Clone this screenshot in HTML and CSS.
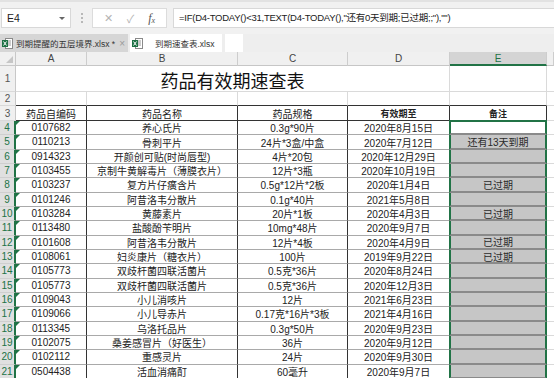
FILE: index.html
```html
<!DOCTYPE html>
<html lang="zh-CN">
<head>
<meta charset="utf-8">
<title>药品有效期速查表</title>
<link rel="stylesheet" href="styles.css">
</head>
<body>
<div class="app">
  <div class="toolbar">
    <div class="namebox"><span>E4</span><span class="caret"></span></div>
    <div class="grip"><i></i><i></i><i></i></div>
    <div class="btns"><span class="bx">✕</span><span class="bok">✓</span><span class="fx">f<sub>x</sub></span></div>
    <div class="formula">=IF(D4-TODAY()&lt;31,TEXT(D4-TODAY(),"还有0天到期;已过期;;"),"")</div>
  </div>
  <div class="tabs">
    <div class="tab dim">
      <svg class="xl" width="11" height="11" viewBox="0 0 11 11"><rect x="3.5" y="0.5" width="7" height="10" fill="#fff" stroke="#8a8a8a"/><path d="M6 3h3M6 5h3M6 7h3" stroke="#9a9a9a"/><rect x="0" y="2" width="6" height="7" fill="#1e7145"/><path d="M1.5 3.5l3 4M4.5 3.5l-3 4" stroke="#fff" stroke-width="1"/></svg>
      <span class="tname">到期提醒的五层境界.xlsx *</span><span class="close">×</span>
    </div>
    <div class="tab on">
      <svg class="xl" width="11" height="11" viewBox="0 0 11 11"><rect x="3.5" y="0.5" width="7" height="10" fill="#fff" stroke="#8a8a8a"/><path d="M6 3h3M6 5h3M6 7h3" stroke="#9a9a9a"/><rect x="0" y="2" width="6" height="7" fill="#1e7145"/><path d="M1.5 3.5l3 4M4.5 3.5l-3 4" stroke="#fff" stroke-width="1"/></svg>
      <span class="tname wide">到期速查表.xlsx</span>
    </div>
    <div class="tab new"></div>
  </div>
  <div class="sheet">
    <div class="corner"></div><div class="ch">A</div><div class="ch">B</div><div class="ch">C</div><div class="ch">D</div><div class="ch sel">E</div><div class="ch"></div>

    <div class="rh">1</div><div class="c title">药品有效期速查表</div><div class="c"></div><div class="f"></div>
    <div class="rh">2</div><div class="c top"></div><div class="c top"></div><div class="c top"></div><div class="c top"></div><div class="c top"></div><div class="f"></div>
    <div class="rh">3</div><div class="hd">药品自编码</div><div class="hd">药品名称</div><div class="hd">药品规格</div><div class="hd b">有效期至</div><div class="hd b">备注</div><div class="f"></div>

    <div class="rh s">4</div><div class="tb a">0107682</div><div class="tb">养心氏片</div><div class="tb">0.3g*90片</div><div class="tb">2020年8月15日</div><div class="e act"></div><div class="f"></div>
    <div class="rh s">5</div><div class="tb a">0110213</div><div class="tb">骨刺平片</div><div class="tb">24片*3盒/中盒</div><div class="tb">2020年7月12日</div><div class="e">还有13天到期</div><div class="f"></div>
    <div class="rh s">6</div><div class="tb a">0914323</div><div class="tb">开颜创可贴(时尚唇型)</div><div class="tb">4片*20包</div><div class="tb">2020年12月29日</div><div class="e"></div><div class="f"></div>
    <div class="rh s">7</div><div class="tb a">0103455</div><div class="tb">京制牛黄解毒片（薄膜衣片）</div><div class="tb">12片*3瓶</div><div class="tb">2020年10月19日</div><div class="e"></div><div class="f"></div>
    <div class="rh s">8</div><div class="tb a">0103237</div><div class="tb">复方片仔癀含片</div><div class="tb">0.5g*12片*2板</div><div class="tb">2020年1月4日</div><div class="e">已过期</div><div class="f"></div>
    <div class="rh s">9</div><div class="tb a">0101246</div><div class="tb">阿昔洛韦分散片</div><div class="tb">0.1g*40片</div><div class="tb">2021年5月8日</div><div class="e"></div><div class="f"></div>
    <div class="rh s">10</div><div class="tb a">0103284</div><div class="tb">黄藤素片</div><div class="tb">20片*1板</div><div class="tb">2020年4月3日</div><div class="e">已过期</div><div class="f"></div>
    <div class="rh s">11</div><div class="tb a">0113480</div><div class="tb">盐酸酚苄明片</div><div class="tb">10mg*48片</div><div class="tb">2020年9月7日</div><div class="e"></div><div class="f"></div>
    <div class="rh s">12</div><div class="tb a">0101608</div><div class="tb">阿昔洛韦分散片</div><div class="tb">12片*4板</div><div class="tb">2020年4月9日</div><div class="e">已过期</div><div class="f"></div>
    <div class="rh s">13</div><div class="tb a">0108061</div><div class="tb">妇炎康片（糖衣片）</div><div class="tb">100片</div><div class="tb">2019年9月22日</div><div class="e">已过期</div><div class="f"></div>
    <div class="rh s">14</div><div class="tb a">0105773</div><div class="tb">双歧杆菌四联活菌片</div><div class="tb">0.5克*36片</div><div class="tb">2020年8月24日</div><div class="e"></div><div class="f"></div>
    <div class="rh s">15</div><div class="tb a">0105773</div><div class="tb">双歧杆菌四联活菌片</div><div class="tb">0.5克*36片</div><div class="tb">2020年12月3日</div><div class="e"></div><div class="f"></div>
    <div class="rh s">16</div><div class="tb a">0109043</div><div class="tb">小儿消咳片</div><div class="tb">12片</div><div class="tb">2021年6月23日</div><div class="e"></div><div class="f"></div>
    <div class="rh s">17</div><div class="tb a">0109066</div><div class="tb">小儿导赤片</div><div class="tb">0.17克*16片*3板</div><div class="tb">2021年4月16日</div><div class="e"></div><div class="f"></div>
    <div class="rh s">18</div><div class="tb a">0113345</div><div class="tb">乌洛托品片</div><div class="tb">0.3g*50片</div><div class="tb">2020年9月23日</div><div class="e"></div><div class="f"></div>
    <div class="rh s">19</div><div class="tb a">0102075</div><div class="tb">桑姜感冒片（好医生）</div><div class="tb">36片</div><div class="tb">2020年9月12日</div><div class="e"></div><div class="f"></div>
    <div class="rh s">20</div><div class="tb a">0102112</div><div class="tb">重感灵片</div><div class="tb">24片</div><div class="tb">2020年9月30日</div><div class="e"></div><div class="f"></div>
    <div class="rh s">21</div><div class="tb a">0504438</div><div class="tb">活血消痛酊</div><div class="tb">60毫升</div><div class="tb">2020年9月7日</div><div class="e"></div><div class="f"></div>
  </div>
</div>
</body>
</html>
```
FILE: styles.css
```css
* { box-sizing: border-box; margin: 0; padding: 0; }
body {
  width: 554px;
  height: 378px;
  overflow: hidden;
  background: #fff;
  font-family: "Liberation Sans", "Noto Sans CJK SC", sans-serif;
  color: #222;
}
.app { width: 554px; }

/* formula toolbar */
.toolbar {
  height: 34px;
  background: #f1f1f1;
  border-top: 2px solid #e2e2e2;
  display: flex;
  align-items: center;
  padding-left: 1px;
}
.namebox {
  width: 70px;
  height: 20px;
  background: #fff;
  border: 1px solid #d8d8d8;
  display: flex;
  align-items: center;
  justify-content: space-between;
  padding: 0 5px 0 5px;
  font-size: 10.5px;
  color: #222;
}
.caret {
  width: 0; height: 0;
  border-left: 3px solid transparent;
  border-right: 3px solid transparent;
  border-top: 3px solid #666;
}
.grip {
  width: 21px;
  height: 20px;
  display: flex;
  flex-direction: column;
  align-items: center;
  justify-content: center;
  gap: 2px;
}
.grip i {
  display: block;
  width: 2px;
  height: 2px;
  background: #b8b8b8;
}
.btns {
  width: 75px;
  height: 20px;
  background: #fff;
  border: 1px solid #dcdcdc;
  display: flex;
  align-items: center;
  justify-content: space-around;
  padding: 0 4px;
  color: #b4b4b4;
  font-size: 11px;
}
.btns .fx {
  font-family: "Liberation Serif", serif;
  font-style: italic;
  color: #555;
  font-size: 12px;
}
.btns .fx sub { font-size: 8px; vertical-align: -1px; }
.formula {
  flex: 1;
  margin-left: 6px;
  height: 20px;
  background: #fff;
  border: 1px solid #d8d8d8;
  border-right: none;
  padding-left: 5px;
  font-size: 9.5px;
  letter-spacing: -0.25px;
  line-height: 18px;
  white-space: nowrap;
  overflow: hidden;
  color: #222;
}

/* workbook tabs */
.tabs {
  height: 18px;
  background: #eeeeee;
  display: flex;
  align-items: stretch;
}
.tab {
  display: flex;
  align-items: center;
  font-size: 8.5px;
  color: #333;
  white-space: nowrap;
}
.tab.dim {
  width: 128px;
  background: #d6d6d6;
  padding-left: 2px;
}
.tab.on {
  width: 92px;
  margin-left: 2px;
  background: #fff;
  padding-left: 2px;
}
.tab.new {
  width: 18px;
  margin-left: 3px;
  background: #fff;
}
.xl { flex: none; }
.tname { margin-left: 3px; }
.tname.wide { margin-left: 12px; }
.close { margin-left: 4px; color: #9a9a9a; font-size: 10px; }

/* sheet grid */
.sheet {
  display: grid;
  grid-template-columns: 16px 71px 151px 110px 102px 97px 1fr;
  grid-template-rows: 14px 26px 14px 15px repeat(18, 14.34px);
  font-size: 10px;
}
.sheet > div {
  display: flex;
  align-items: center;
  justify-content: center;
  white-space: nowrap;
  overflow: hidden;
  position: relative;
}
.corner {
  background: #f0f0f0;
  border-right: 1px solid #c8c8c8;
  border-bottom: 1px solid #c8c8c8;
}
.corner::after {
  content: "";
  position: absolute;
  right: 2px;
  bottom: 2px;
  border-left: 7px solid transparent;
  border-bottom: 7px solid #c6c6c6;
}
.ch {
  background: #f0f0f0;
  border-right: 1px solid #cdcdcd;
  border-bottom: 1px solid #c6c6c6;
  color: #444;
  font-size: 10px;
}
.ch.sel {
  background: #d4d4d4;
  color: #217346;
  border-bottom: 2px solid #217346;
}
.rh {
  background: #f0f0f0;
  border-right: 1px solid #c8c8c8;
  border-bottom: 1px solid #d9d9d9;
  color: #555;
  font-size: 10px;
}
.rh.s {
  background: #e0e0e0;
  color: #217346;
  border-right: 2px solid #217346;
  border-bottom: 1px solid #cfcfcf;
}
.c {
  border-right: 1px solid #dadada;
  border-bottom: 1px solid #dadada;
}
.c.top { border-bottom: 1px solid #333; }
.c.title {
  grid-column: span 4;
  font-family: "Noto Sans CJK SC", sans-serif;
  font-size: 18px;
  color: #111;
  padding-top: 3px;
}
.f {
  border-bottom: 1px solid #dadada;
}
.hd {
  border-right: 1px solid #333;
  border-bottom: 1px solid #333;
  font-family: "Noto Sans CJK SC", sans-serif;
  font-size: 10px;
  color: #222;
}
.hd.b { font-weight: bold; font-size: 9px; }
.tb {
  border-right: 1px solid #333;
  border-bottom: 1px solid #a9a9a9;
  color: #222;
}
.tb.a::before {
  content: "";
  position: absolute;
  left: 0;
  top: 0;
  border-right: 4px solid transparent;
  border-top: 4px solid #1e7145;
}
.e {
  margin-left: -1px;
  background: #c6c6c6;
  border-left: 2px solid #217346;
  border-right: 2px solid #217346;
  border-bottom: 2px solid #8a8a8a;
  color: #2a2a2a;
}
.e.act {
  margin-top: -1px;
  background: #fff;
  border-top: 2px solid #217346;
  border-bottom: 2px solid #8a8a8a;
}
```
